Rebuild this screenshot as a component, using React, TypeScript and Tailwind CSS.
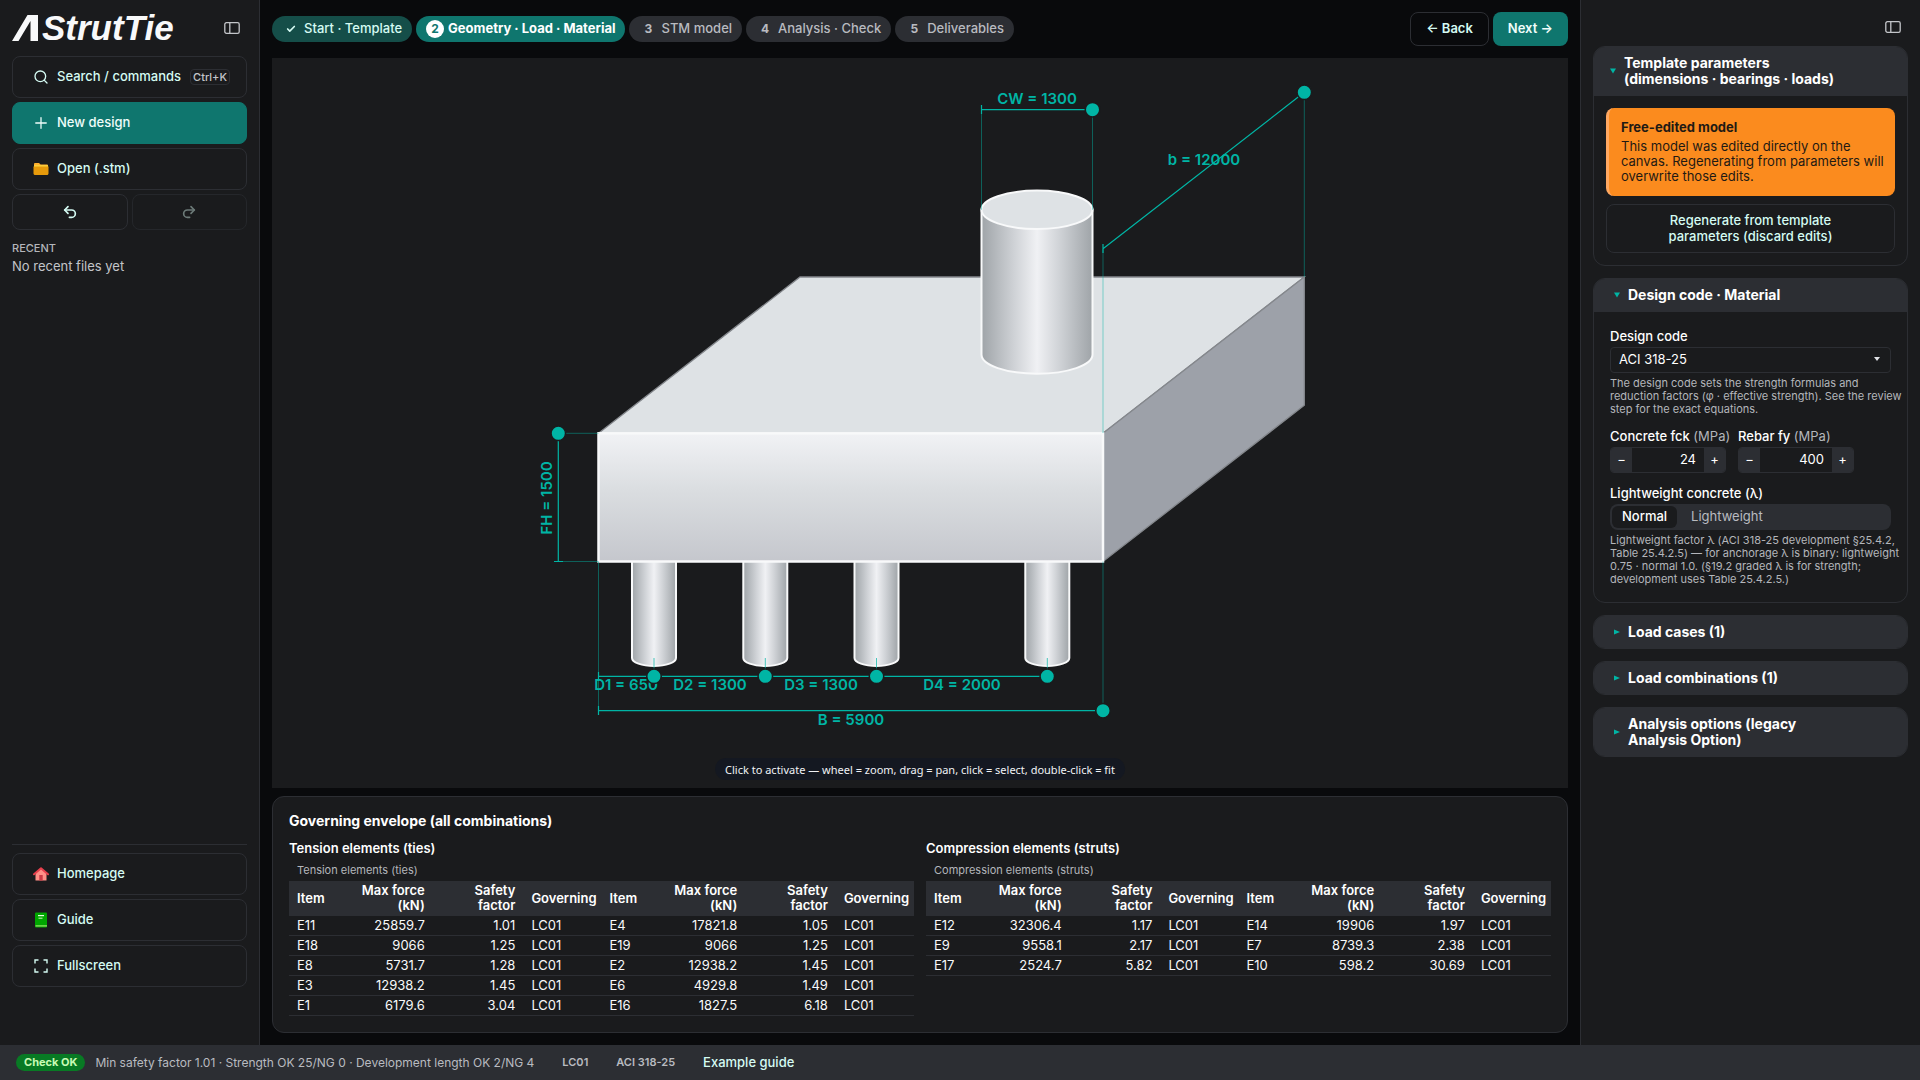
import type { ReactNode } from "react";
import { Check, Plus, Redo2, Search, Undo2 } from "lucide-react";

type Row = [string, string, string, string];

const ties: Row[][] = [
  [["E11", "25859.7", "1.01", "LC01"], ["E4", "17821.8", "1.05", "LC01"]],
  [["E18", "9066", "1.25", "LC01"], ["E19", "9066", "1.25", "LC01"]],
  [["E8", "5731.7", "1.28", "LC01"], ["E2", "12938.2", "1.45", "LC01"]],
  [["E3", "12938.2", "1.45", "LC01"], ["E6", "4929.8", "1.49", "LC01"]],
  [["E1", "6179.6", "3.04", "LC01"], ["E16", "1827.5", "6.18", "LC01"]],
];

const struts: Row[][] = [
  [["E12", "32306.4", "1.17", "LC01"], ["E14", "19906", "1.97", "LC01"]],
  [["E9", "9558.1", "2.17", "LC01"], ["E7", "8739.3", "2.38", "LC01"]],
  [["E17", "2524.7", "5.82", "LC01"], ["E10", "598.2", "30.69", "LC01"]],
];

const upcoming = ["STM model", "Analysis · Check", "Deliverables"];

const piles = [382, 493.3, 604.5, 775.3];

function PanelIcon() {
  return (
    <svg width="16" height="12" viewBox="0 0 16 12" fill="none" stroke="#c3c5c9" strokeWidth="1.3">
      <rect x="0.8" y="0.7" width="14.4" height="10.6" rx="1.6" />
      <path d="M5.8 .7v10.6" />
    </svg>
  );
}

function FolderIcon() {
  return (
    <svg width="16" height="16" viewBox="0 0 16 16">
      <path d="M1 3.2C1 2.5 1.5 2 2.2 2h3.4c.4 0 .7.1.9.4L7.6 3.4h6.2c.7 0 1.2.5 1.2 1.2V6H1z" fill="#ffb02e" />
      <path d="M.5 6.2C.5 5.5 1 5 1.7 5h12.6c.7 0 1.2.5 1.2 1.2v6.3c0 .8-.7 1.5-1.5 1.5H2C1.2 14 .5 13.3.5 12.5z" fill="#e69a0b" />
      <path d="M1 4.2h14v1.3H1z" fill="#fcd53f" />
    </svg>
  );
}

function HomeIcon() {
  return (
    <svg width="16" height="16" viewBox="0 0 16 16">
      <path d="M2.5 7.5 8 2.5l5.5 5v7h-11z" fill="#ff8f87" />
      <path d="M6.3 9h3.4v5.5H6.3z" fill="#ca3a45" />
      <path d="M1 8.3 8 2.3l7 6" fill="none" stroke="#e63f4c" strokeWidth="2" strokeLinecap="round" strokeLinejoin="round" />
    </svg>
  );
}

function BookIcon() {
  return (
    <svg width="16" height="16" viewBox="0 0 16 16">
      <rect x="2" y="0.5" width="12" height="15" rx="1" fill="#00a600" />
      <path d="M2.5 13.3H14v1.2H2.5z" fill="#9be86b" />
      <rect x="5" y="3" width="6" height="1.2" fill="#e8ffe0" />
      <rect x="5.5" y="5.7" width="4" height="1" fill="#c5f5b5" />
    </svg>
  );
}

function FullscreenIcon() {
  return (
    <svg width="16" height="16" viewBox="0 0 16 16" fill="none" stroke="currentColor" strokeWidth="1.4">
      <path d="M2 5.5V2h3.5M10.5 2H14v3.5M14 10.5V14h-3.5M5.5 14H2v-3.5" />
    </svg>
  );
}

function SideButton({ icon, label, primary, hint }: { icon: ReactNode; label: string; primary?: boolean; hint?: string }) {
  return (
    <button
      className={`flex h-[42px] w-full items-center gap-2 rounded-lg border pl-5 pr-4 font-medium ${
        primary ? "border-[#0f766e] bg-[#0f766e] text-[#f0fdfa]" : "border-[#2c2e33] text-[#d5fbf3]"
      }`}
    >
      <span className="flex w-4 shrink-0 justify-center">{icon}</span>
      {label}
      {hint && (
        <kbd className="ml-auto rounded border border-[#2c2e33] px-[2px] font-[Inter] text-[11px] leading-[14px] text-[#c3c5c9]">
          {hint}
        </kbd>
      )}
    </button>
  );
}

function Handle({ x, y }: { x: number; y: number }) {
  return <circle cx={x} cy={y} r="7.25" fill="#00b5a5" stroke="#1a1b1d" strokeWidth="1.5" />;
}

function Model() {
  return (
    <svg
      className="block h-full w-full font-[Inter] text-[15px] font-semibold"
      viewBox="0 0 1296 730"
      role="img"
      aria-label="Pile cap model"
    >
      <defs>
        <linearGradient id="front" x1="0" y1="0" x2="0" y2="1">
          <stop offset="0" stopColor="#f1f2f5" />
          <stop offset="0.45" stopColor="#dadde0" />
          <stop offset="1" stopColor="#c5c7cd" />
        </linearGradient>
        <linearGradient id="round" x1="0" y1="0" x2="1" y2="0">
          <stop offset="0" stopColor="#9fa4a8" />
          <stop offset="0.3" stopColor="#d0d3d7" />
          <stop offset="0.5" stopColor="#f0f1f4" />
          <stop offset="0.7" stopColor="#d0d3d7" />
          <stop offset="1" stopColor="#9fa4a8" />
        </linearGradient>
      </defs>

      {/* Piles */}
      <g fill="url(#round)" stroke="#f8f9fa" strokeWidth="2">
        {piles.map((x) => (
          <path key={x} d={`M${x - 22} 502V600A22 8 0 0 0 ${x + 22} 600V502z`} />
        ))}
      </g>

      {/* Cap */}
      <g stroke="#85888d" strokeWidth="1.3">
        <path d="M326.5 375.3 528 219H1032.3L831 375.3z" fill="#dee2e5" />
        <path d="M831 375.3 1032.3 219V347.3L831 503.5z" fill="#9da1a9" />
      </g>
      <rect x="326.5" y="375.3" width="504.5" height="128.2" fill="url(#front)" stroke="#f8f9fa" strokeWidth="2.5" />

      {/* Column */}
      <g stroke="#f8f9fa" strokeWidth="2">
        <path d="M709.5 151.8V296.5A55.5 19.2 0 0 0 820.5 296.5V151.8z" fill="url(#round)" />
        <ellipse cx="765" cy="151.8" rx="55.5" ry="19.2" fill="#dee2e5" />
      </g>

      {/* Extension lines */}
      <g stroke="#00b5a5" opacity="0.45">
        <path d="M709.5 52V151.8M820.5 52V151.8M831 191V375M1032.3 34V219M286 375.3H326.5M286 503.5H326.5M326.5 503.5V652.7M831 503.5V652.7" />
      </g>
      <path d="M382 600v18M493.3 600v18M604.5 600v18M775.3 600v18" stroke="#00b5a5" opacity="0.7" />

      {/* Dimension lines */}
      <g stroke="#00b5a5" strokeWidth="1.2" fill="none">
        <path d="M709.5 51.7H820.5M709.5 47v9M831 190.7 1032.3 34.3M831 186v9" />
        <path d="M286.3 375.3V503.5M282 503.5h9M326.5 618.3H775.3M326.5 614v9M326.5 652.7H831M326.5 648v9" />
      </g>

      <g fill="#00b5a5" textAnchor="middle">
        <text x="765" y="46">CW = 1300</text>
        <text x="932" y="107">b = 12000</text>
        <text x="354" y="632">D1 = 650</text>
        <text x="438" y="632">D2 = 1300</text>
        <text x="549" y="632">D3 = 1300</text>
        <text x="690" y="632">D4 = 2000</text>
        <text x="579" y="667">B = 5900</text>
        <text transform="translate(280 440) rotate(-90)">FH = 1500</text>
      </g>

      <Handle x={820.5} y={51.7} />
      <Handle x={1032.3} y={34.3} />
      <Handle x={286.3} y={375.3} />
      <Handle x={831} y={652.7} />
      {piles.map((x) => (
        <Handle key={x} x={x} y={618.3} />
      ))}
    </svg>
  );
}

function EnvelopeTable({ title, rows }: { title: string; rows: Row[][] }) {
  return (
    <section className="min-w-0 flex-1">
      <h3 className="text-[13px] font-semibold leading-4 text-white">{title}</h3>
      <table className="mt-2 w-full table-fixed border-collapse leading-[15px]">
        <caption className="px-2 pb-1 text-left text-[11px] leading-[13px] text-[#b4b6bb]">{title}</caption>
        <colgroup>
          {[0, 1].map((i) => [
            <col key={`a${i}`} className="w-[10%]" />,
            <col key={`b${i}`} className="w-[13%]" />,
            <col key={`c${i}`} className="w-[14.5%]" />,
            <col key={`d${i}`} className="w-[12.5%]" />,
          ])}
        </colgroup>
        <thead className="bg-[#2c2e33] text-white">
          <tr className="border-b border-[#2c2e33]">
            {[0, 1].map((i) => [
              <th key={`a${i}`} className="px-2 py-[2px] text-left font-semibold">Item</th>,
              <th key={`b${i}`} className="px-2 py-[2px] text-right font-semibold">Max force (kN)</th>,
              <th key={`c${i}`} className="px-2 py-[2px] text-right font-semibold">Safety<br />factor</th>,
              <th key={`d${i}`} className="px-2 py-[2px] text-left font-semibold">Governing</th>,
            ])}
          </tr>
        </thead>
        <tbody className="text-[#f8f9fa]">
          {rows.map((pair) => (
            <tr key={pair[0][0]} className="border-b border-[#2c2e33]">
              {pair.map((r) =>
                r.map((cell, i) => (
                  <td key={`${r[0]}-${i}`} className={`px-2 py-[2px] ${i === 1 || i === 2 ? "text-right" : ""}`}>
                    {cell}
                  </td>
                ))
              )}
            </tr>
          ))}
        </tbody>
      </table>
    </section>
  );
}

function Card({ title, open, wide, children }: { title: ReactNode; open?: boolean; wide?: boolean; children?: ReactNode }) {
  return (
    <section className="overflow-hidden rounded-xl border border-[#2c2e33]">
      <button
        className={`flex w-full items-center gap-2 bg-[#2c2e33] py-2 text-left text-sm font-bold leading-4 text-white ${
          wide ? "px-4" : "pl-5 pr-16"
        } ${open ? "border-b border-[#2c2e33]" : ""}`}
      >
        <svg className="shrink-0" width="6" height="6" viewBox="0 0 6 6" fill="#00b5a5">
          {open ? <path d="M0 .5h6L3 5.5z" /> : <path d="M0 .5v5L6 3z" />}
        </svg>
        <span>{title}</span>
      </button>
      {children}
    </section>
  );
}

function Stepper({ id, label, value }: { id: string; label: string; value: string }) {
  return (
    <div className="w-[116px]">
      <label htmlFor={id} className="block whitespace-nowrap font-medium leading-4 text-white">
        {label} <span className="font-normal text-[#b4b6bb]">(MPa)</span>
      </label>
      <div className="mt-[3px] flex h-[26px] overflow-hidden rounded border border-[#2c2e33] text-white">
        <button className="w-[21px] bg-[#2c2e33]" aria-label={`Decrease ${label}`}>−</button>
        <input id={id} defaultValue={value} className="w-0 flex-1 bg-transparent px-2 text-right" />
        <button className="w-[21px] bg-[#2c2e33]" aria-label={`Increase ${label}`}>+</button>
      </div>
    </div>
  );
}

export default function App() {
  return (
    <div className="flex h-screen flex-col bg-[#090a0c] font-[Inter,'Noto_Sans',sans-serif] text-[13px]">
      <div className="flex min-h-0 flex-1">
        {/* Left sidebar */}
        <aside className="flex w-[260px] shrink-0 flex-col border-r border-[#2c2e33] bg-[#1a1b1d] pl-3 pr-3">
          <div className="flex h-14 items-center justify-between pr-[7px]">
            <div className="flex items-center text-[#f8f9fa]">
              <svg width="26" height="26" viewBox="0 0 26 26" fill="currentColor" aria-hidden="true">
                <path d="M0 26 15.5 0H26V26H18.5V6L6.5 26z" />
              </svg>
              <span className="ml-1 font-['Liberation_Sans',sans-serif] text-[35px] font-bold italic leading-9">StrutTie</span>
            </div>
            <button aria-label="Toggle sidebar">
              <PanelIcon />
            </button>
          </div>

          <nav className="flex flex-col gap-1">
            <SideButton icon={<Search size={16} />} label="Search / commands" hint="Ctrl+K" />
            <SideButton icon={<Plus size={18} strokeWidth={1.7} className="shrink-0" />} label="New design" primary />
            <SideButton icon={<FolderIcon />} label="Open (.stm)" />
            <div className="flex gap-1">
              <button aria-label="Undo" className="flex h-9 flex-1 items-center justify-center rounded-lg border border-[#2c2e33] text-[#d5fbf3]">
                <Undo2 size={16} strokeWidth={2.5} />
              </button>
              <button aria-label="Redo" disabled className="flex h-9 flex-1 items-center justify-center rounded-lg border border-[#25272b] text-[#6c7a78]">
                <Redo2 size={16} strokeWidth={2.5} />
              </button>
            </div>
          </nav>

          <h2 className="mt-3 text-[11px] font-medium leading-3 text-[#b4b6bb]">RECENT</h2>
          <p className="mt-1 leading-4 text-[#c3c5c9]">No recent files yet</p>

          <div className="mb-[58px] mt-auto flex flex-col gap-1 border-t border-[#2c2e33] pt-2">
            <SideButton icon={<HomeIcon />} label="Homepage" />
            <SideButton icon={<BookIcon />} label="Guide" />
            <SideButton icon={<FullscreenIcon />} label="Fullscreen" />
          </div>
        </aside>

        {/* Workspace */}
        <main className="flex min-w-0 flex-1 flex-col px-3 py-3">
          <div className="flex items-start justify-between">
            <ol className="flex gap-1 pt-1 font-medium">
              <li className="flex h-[26px] items-center gap-1 rounded-full bg-[#154e49] px-[10px] text-[#d5fbf3]">
                <span className="flex w-[18px] justify-center">
                  <Check size={10} strokeWidth={4} />
                </span>
                Start · Template
              </li>
              <li className="flex h-[26px] items-center gap-1 rounded-full bg-[#0f766e] px-[10px] font-bold text-white">
                <span className="flex h-[18px] w-[18px] items-center justify-center rounded-full bg-white text-xs text-[#0f766e]">
                  2
                </span>
                Geometry · Load · Material
              </li>
              {upcoming.map((step, i) => (
                <li key={step} className="flex h-[26px] items-center gap-1 rounded-full bg-[#2c2e33] px-[10px] text-[#b9bbc0]">
                  <span className="w-[18px] text-center text-xs font-bold">{i + 3}</span>
                  {step}
                </li>
              ))}
            </ol>
            <div className="flex gap-1 font-semibold">
              <button className="h-[34px] rounded-lg border border-[#2c2e33] px-[15px] text-[#d5fbf3]">← Back</button>
              <button className="h-[34px] rounded-lg bg-[#0f766e] px-[15px] text-[#f0fdfa]">Next →</button>
            </div>
          </div>

          <div className="relative mt-3 min-h-0 flex-1 bg-[#1a1b1d]">
            <Model />
            <p className="absolute bottom-2 left-1/2 -translate-x-1/2 whitespace-nowrap rounded-full bg-[#141821] px-[10px] pb-px pt-[3px] font-['Noto_Sans',sans-serif] text-[11px] leading-[18px] text-[#f0f2f5]">
              Click to activate — wheel = zoom, drag = pan, click = select, double-click = fit
            </p>
          </div>

          <section className="mt-2 rounded-xl border border-[#2c2e33] bg-[#1a1b1d] p-4">
            <h2 className="text-sm font-bold leading-[15px] text-white">Governing envelope (all combinations)</h2>
            <div className="mt-3 flex gap-3">
              <EnvelopeTable title="Tension elements (ties)" rows={ties} />
              <EnvelopeTable title="Compression elements (struts)" rows={struts} />
            </div>
          </section>
        </main>

        {/* Right sidebar */}
        <aside className="flex w-[340px] shrink-0 flex-col gap-3 border-l border-[#2c2e33] bg-[#1a1b1d] px-3">
          <div className="flex h-[34px] items-end justify-end pb-px pr-[7px]">
            <button aria-label="Toggle inspector">
              <PanelIcon />
            </button>
          </div>

          <Card open wide title={<>Template parameters<br />(dimensions · bearings · loads)</>}>
            <div className="p-3">
              <div role="alert" className="rounded-lg border-l-[3px] border-[#ffa861] bg-[#fb8b1e] py-3 pl-3 pr-1 leading-[15px] text-[#1f1a14]">
                <p className="font-bold">Free-edited model</p>
                <p className="mt-1">
                  This model was edited directly on the canvas. Regenerating from parameters will overwrite those edits.
                </p>
              </div>
              <button className="mt-2 w-full rounded-lg border border-[#2c2e33] px-14 pb-2 pt-[7px] font-medium leading-4 text-[#d5fbf3]">
                Regenerate from template parameters (discard edits)
              </button>
            </div>
          </Card>

          <Card open title="Design code · Material">
            <div className="p-4">
              <label htmlFor="code" className="block font-medium leading-4 text-white">Design code</label>
              <div className="relative mt-[3px]">
                <select id="code" className="block h-[26px] w-full appearance-none rounded border border-[#2c2e33] bg-transparent px-2 text-white">
                  <option>ACI 318-25</option>
                </select>
                <svg className="pointer-events-none absolute right-[11px] top-[10px]" width="6" height="4" viewBox="0 0 6 4" fill="#e0e2e6">
                  <path d="M0 0h6L3 4z" />
                </svg>
              </div>
              <p className="-mr-[14px] mt-1 text-[11px] leading-[13px] text-[#b4b6bb]">
                The design code sets the strength formulas and reduction factors (φ · effective strength). See the review
                step for the exact equations.
              </p>

              <div className="mt-3 flex gap-3">
                <Stepper id="fck" label="Concrete fck" value="24" />
                <Stepper id="fy" label="Rebar fy" value="400" />
              </div>

              <p className="mt-3 font-medium leading-4 text-white">Lightweight concrete (λ)</p>
              <div className="mt-[3px] flex h-[26px] rounded-lg bg-[#2c2e33] p-[2px]">
                <button className="rounded-md bg-[#1a1b1d] px-[10px] font-medium text-white">Normal</button>
                <button className="px-[14px] text-[#b9bbc0]">Lightweight</button>
              </div>
              <p className="-mr-[14px] mt-1 text-[11px] leading-[13px] text-[#b4b6bb]">
                Lightweight factor λ (ACI 318-25 development §25.4.2, Table 25.4.2.5) — for anchorage λ is binary:
                lightweight 0.75 · normal 1.0. (§19.2 graded λ is for strength;
                <br />
                development uses Table 25.4.2.5.)
              </p>
            </div>
          </Card>

          <Card title="Load cases (1)" />
          <Card title="Load combinations (1)" />
          <Card title="Analysis options (legacy Analysis Option)" />
        </aside>
      </div>

      {/* Status bar */}
      <footer className="flex h-[35px] shrink-0 items-center bg-[#2c2e33] px-4 text-[#b9bbc0]">
        <span className="rounded-full bg-[#087a24] px-2 text-[11px] font-bold leading-[17px] text-[#c9fbb5]">Check OK</span>
        <span className="ml-[10px] text-xs">Min safety factor 1.01 · Strength OK 25/NG 0 · Development length OK 2/NG 4</span>
        <span className="ml-7 text-[11px] font-semibold">LC01</span>
        <span className="ml-7 text-[11px] font-semibold">ACI 318-25</span>
        <a href="#guide" className="ml-7 font-medium text-[#d5fbf3]">Example guide</a>
      </footer>
    </div>
  );
}
